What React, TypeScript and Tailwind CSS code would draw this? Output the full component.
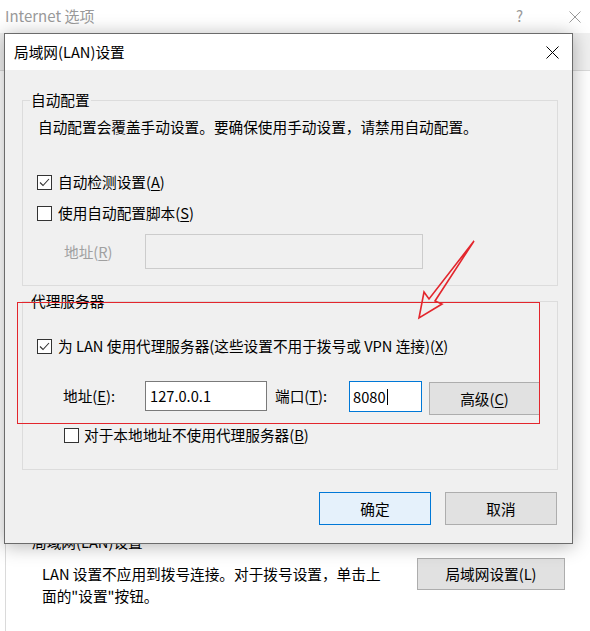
import React from "react";

function CheckBox({ checked }: { checked?: boolean }) {
  return (
    <span className="flex h-[15px] w-[15px] shrink-0 items-center justify-center border border-[#333333] bg-white">
      {checked && (
        <svg width="13" height="13" viewBox="0 0 13 13">
          <path d="M2 6.5 L5 9.5 L11 3" fill="none" stroke="#333333" strokeWidth="1.1" />
        </svg>
      )}
    </span>
  );
}

function Key({ k }: { k: string }) {
  return <u className="underline-offset-[2px]">{k}</u>;
}

function GroupTitle({ children }: { children: React.ReactNode }) {
  return <div className="-mt-[11px] ml-[7px] w-fit bg-[#f0f0f0] px-[1px] leading-[20px]">{children}</div>;
}

export default function App() {
  return (
    <div className="relative h-[631px] w-[590px] overflow-hidden bg-white font-['Noto_Sans_CJK_SC','Noto_Sans',sans-serif] text-[14.67px] text-black">
      {/* parent window: Internet 选项 */}
      <div className="flex h-[33px] items-center justify-between pl-[5px] pr-[9px] text-[15px] text-[#9a9a9a]">
        <span>Internet 选项</span>
        <div className="flex items-center gap-[46px]">
          <span>?</span>
          <svg width="12" height="12" viewBox="0 0 12 12">
            <path d="M0.5 0.5 L11.5 11.5 M11.5 0.5 L0.5 11.5" stroke="#9a9a9a" strokeWidth="1" />
          </svg>
        </div>
      </div>
      <div className="h-[38px] border-b border-[#dadada] bg-[#f0f0f0]" />
      <div className="ml-[5px] h-[560px] border-l border-[#dadada] pt-[461px]">
        <div className="ml-[26px] leading-[20px]">局域网(LAN)设置</div>
        <div className="mt-[6px] flex items-start">
          <p className="ml-[36px] mt-[5px] flex-1 leading-[22px]">
            LAN 设置不应用到拨号连接。对于拨号设置，单击上
            <br />
            面的"设置"按钮。
          </p>
          <button className="mr-[25px] flex h-[32px] w-[148px] items-center justify-center border border-[#adadad] bg-[#e1e1e1]">
            局域网设置(L)
          </button>
        </div>
      </div>

      {/* dialog: 局域网(LAN)设置 */}
      <div className="absolute left-[4px] top-[33px] flex h-[511px] w-[569px] flex-col border border-[#6b6b6b] shadow-[0_2px_18px_rgba(0,0,0,0.3)]">
        <div className="flex h-[36px] items-center justify-between bg-white pl-[9px] pr-[13px]">
          <span className="text-[14.67px]">局域网(LAN)设置</span>
          <svg width="13" height="13" viewBox="0 0 13 13">
            <path d="M0.5 0.5 L12.5 12.5 M12.5 0.5 L0.5 12.5" stroke="#000" strokeWidth="1" />
          </svg>
        </div>

        <div className="flex flex-1 flex-col bg-[#f0f0f0]">
          {/* 自动配置 */}
          <div className="ml-[17px] mt-[30px] w-[536px] border border-[#dcdcdc] pb-[16px]">
            <GroupTitle>自动配置</GroupTitle>
            <div className="pl-[14px]">
              <p className="mt-[7px] pl-[1px] leading-[20px]">自动配置会覆盖手动设置。要确保使用手动设置，请禁用自动配置。</p>
              <label className="mt-[35px] flex h-[20px] items-center gap-[6px]">
                <CheckBox checked />
                <span>
                  自动检测设置(<Key k="A" />)
                </span>
              </label>
              <label className="mt-[11px] flex h-[20px] items-center gap-[6px]">
                <CheckBox />
                <span>
                  使用自动配置脚本(<Key k="S" />)
                </span>
              </label>
              <div className="mt-[11px] flex items-center">
                <span className="ml-[27px] w-[81px] text-[#a0a0a0]">
                  地址(<Key k="R" />)
                </span>
                <div className="h-[35px] w-[278px] border border-[#cccccc] bg-[#f0f0f0]" />
              </div>
            </div>
          </div>

          {/* 代理服务器 */}
          <div className="ml-[17px] mt-[15px] w-[536px] border border-[#dcdcdc] pb-[24px]">
            <GroupTitle>代理服务器</GroupTitle>
            <div className="pl-[14px]">
              <label className="mt-[25px] flex h-[20px] items-center gap-[6px]">
                <CheckBox checked />
                <span>
                  为 LAN 使用代理服务器(这些设置不用于拨号或 VPN 连接)(<Key k="X" />)
                </span>
              </label>
              <div className="mt-[25px] flex items-start">
                <span className="ml-[26px] flex h-[30px] w-[82px] items-center">
                  地址(<Key k="E" />):
                </span>
                <div className="flex h-[30px] w-[122px] items-center border border-[#7a7a7a] bg-white pl-[4px]">127.0.0.1</div>
                <span className="ml-[8px] flex h-[30px] w-[74px] items-center">
                  端口(<Key k="T" />):
                </span>
                <div className="flex h-[31px] w-[73px] items-center border border-[#0078d7] bg-white pl-[3px]">
                  8080
                  <span className="ml-[1px] h-[16px] w-px bg-black" />
                </div>
                <button className="ml-[7px] mt-[1px] flex h-[33px] w-[111px] items-center justify-center border border-[#adadad] bg-[#e1e1e1]">
                  高级(<Key k="C" />)
                </button>
              </div>
              <label className="ml-[27px] mt-[10px] flex h-[20px] items-center gap-[5px]">
                <CheckBox />
                <span>
                  对于本地地址不使用代理服务器(<Key k="B" />)
                </span>
              </label>
            </div>
          </div>

          <div className="mt-[22px] flex justify-end gap-[14px] pr-[15px]">
            <button className="flex h-[33px] w-[112px] items-center justify-center border border-[#0078d7] bg-[#e5f1fb]">确定</button>
            <button className="flex h-[33px] w-[112px] items-center justify-center border border-[#adadad] bg-[#e1e1e1]">取消</button>
          </div>
        </div>
      </div>

      {/* red annotation */}
      <div className="pointer-events-none absolute left-[17px] top-[302px] h-[122px] w-[523px] border border-[#e3262d]" />
      <svg className="pointer-events-none absolute left-0 top-0" width="590" height="631" viewBox="0 0 590 631">
        <polygon
          points="474,241 429,299 424,292 419,318 442,304 435,301"
          fill="none"
          stroke="#e3262d"
          strokeWidth="1.6"
          strokeLinejoin="miter"
        />
      </svg>
    </div>
  );
}
